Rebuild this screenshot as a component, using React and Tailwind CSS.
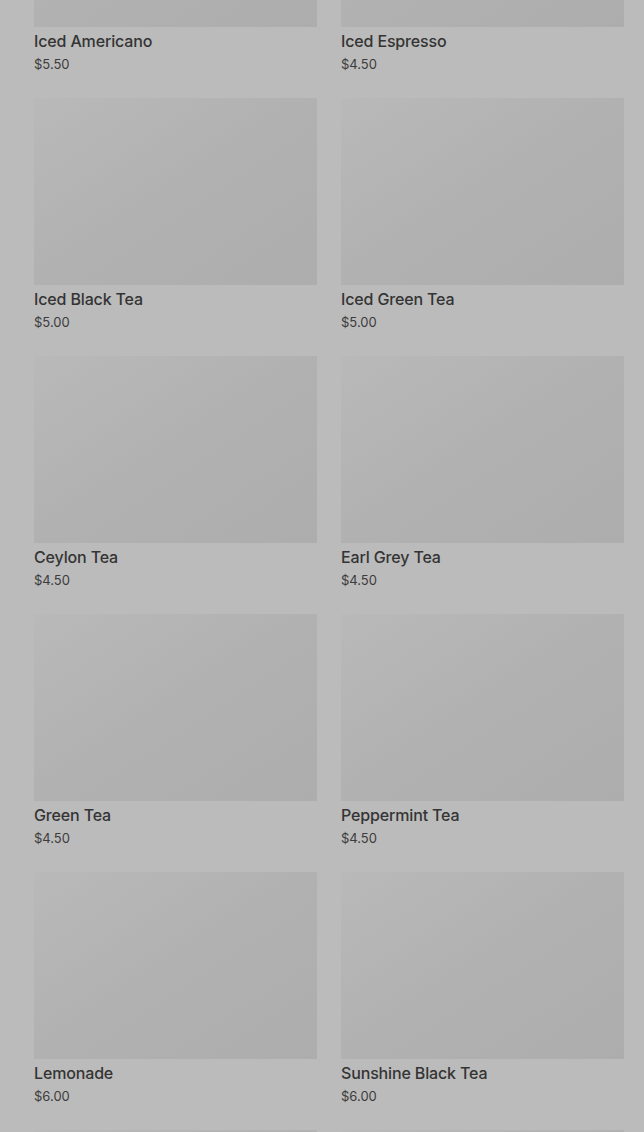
const items = [
  ["Iced Americano", "$5.50"],
  ["Iced Espresso", "$4.50"],
  ["Iced Black Tea", "$5.00"],
  ["Iced Green Tea", "$5.00"],
  ["Ceylon Tea", "$4.50"],
  ["Earl Grey Tea", "$4.50"],
  ["Green Tea", "$4.50"],
  ["Peppermint Tea", "$4.50"],
  ["Lemonade", "$6.00"],
  ["Sunshine Black Tea", "$6.00"],
];

export default function App() {
  return (
    <div className="h-[1132px] w-[644px] overflow-hidden bg-[#bbbbbb]" style={{ fontFamily: "Inter, 'Liberation Sans', sans-serif" }}>
      <div className="-mt-[160px] grid grid-cols-2 gap-x-[24px] gap-y-[24px] pl-[34px] pr-[20px]">
        {items.map(([name, price]) => (
          <div key={name} className="flex flex-col">
            <div className="h-[187px] w-full bg-linear-to-br from-[#b9b9b9] via-[#b1b1b1] to-[#adadad]" />
            <div className="mt-[2px] text-[16px] leading-[24px] font-medium tracking-[-0.15px] text-[#343434]">{name}</div>
            <div className="mt-[1px] text-[13px] leading-[20px] text-[#3c3c3c]">{price}</div>
          </div>
        ))}
        <div className="h-[187px] w-full bg-linear-to-br from-[#b9b9b9] via-[#b1b1b1] to-[#adadad]" />
        <div className="h-[187px] w-full bg-linear-to-br from-[#b9b9b9] via-[#b1b1b1] to-[#adadad]" />
      </div>
    </div>
  );
}
